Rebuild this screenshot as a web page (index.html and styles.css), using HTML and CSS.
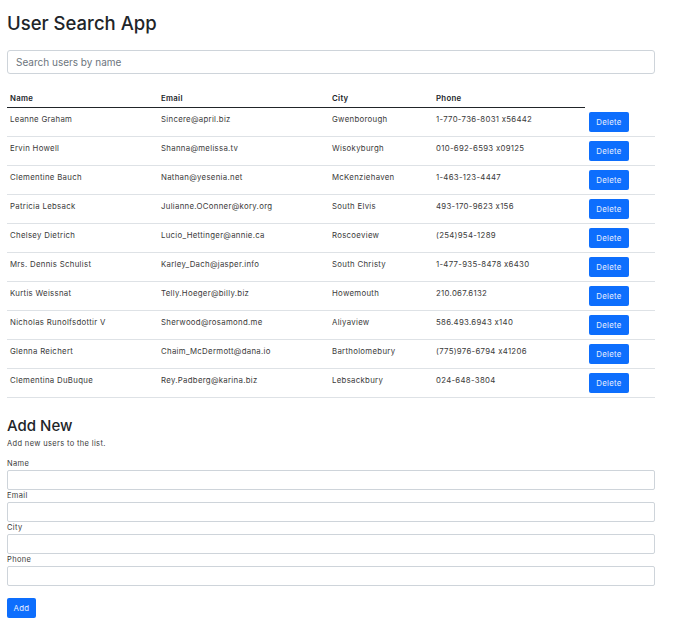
FILE: index.html
```html
<!DOCTYPE html>
<html lang="en">
<head>
<meta charset="utf-8">
<title>User Search App</title>
<link rel="stylesheet" href="styles.css">
</head>
<body>
<div class="app">
  <h1 class="title">User Search App</h1>
  <input class="search" type="text" placeholder="Search users by name">
  <table class="users">
    <colgroup>
      <col class="c-name"><col class="c-email"><col class="c-city"><col class="c-phone"><col class="c-act">
    </colgroup>
    <thead>
      <tr><th>Name</th><th>Email</th><th>City</th><th>Phone</th></tr>
    </thead>
    <tbody>
      <tr><td>Leanne Graham</td><td>Sincere@april.biz</td><td>Gwenborough</td><td>1-770-736-8031 x56442</td><td class="act"><button class="btn">Delete</button></td></tr>
      <tr><td>Ervin Howell</td><td>Shanna@melissa.tv</td><td>Wisokyburgh</td><td>010-692-6593 x09125</td><td class="act"><button class="btn">Delete</button></td></tr>
      <tr><td>Clementine Bauch</td><td>Nathan@yesenia.net</td><td>McKenziehaven</td><td>1-463-123-4447</td><td class="act"><button class="btn">Delete</button></td></tr>
      <tr><td>Patricia Lebsack</td><td>Julianne.OConner@kory.org</td><td>South Elvis</td><td>493-170-9623 x156</td><td class="act"><button class="btn">Delete</button></td></tr>
      <tr><td>Chelsey Dietrich</td><td>Lucio_Hettinger@annie.ca</td><td>Roscoeview</td><td>(254)954-1289</td><td class="act"><button class="btn">Delete</button></td></tr>
      <tr><td>Mrs. Dennis Schulist</td><td>Karley_Dach@jasper.info</td><td>South Christy</td><td>1-477-935-8478 x6430</td><td class="act"><button class="btn">Delete</button></td></tr>
      <tr><td>Kurtis Weissnat</td><td>Telly.Hoeger@billy.biz</td><td>Howemouth</td><td>210.067.6132</td><td class="act"><button class="btn">Delete</button></td></tr>
      <tr><td>Nicholas Runolfsdottir V</td><td>Sherwood@rosamond.me</td><td>Aliyaview</td><td>586.493.6943 x140</td><td class="act"><button class="btn">Delete</button></td></tr>
      <tr><td>Glenna Reichert</td><td>Chaim_McDermott@dana.io</td><td>Bartholomebury</td><td>(775)976-6794 x41206</td><td class="act"><button class="btn">Delete</button></td></tr>
      <tr><td>Clementina DuBuque</td><td>Rey.Padberg@karina.biz</td><td>Lebsackbury</td><td>024-648-3804</td><td class="act"><button class="btn">Delete</button></td></tr>
    </tbody>
  </table>

  <h3 class="sub">Add New</h3>
  <p class="desc">Add new users to the list.</p>
  <form class="form">
    <label class="label">Name</label>
    <input class="field" type="text">
    <label class="label">Email</label>
    <input class="field" type="text">
    <label class="label">City</label>
    <input class="field" type="text">
    <label class="label">Phone</label>
    <input class="field" type="text">
    <button class="btn add" type="button">Add</button>
  </form>
</div>
</body>
</html>
```

FILE: styles.css
```css
* { box-sizing: border-box; }
html, body { margin: 0; background: #fff; }
body {
  font-family: Inter, "Liberation Sans", sans-serif;
  color: #212529;
}
.app {
  width: 648px;
  margin-left: 7px;
  display: flex;
  flex-direction: column;
  align-items: flex-start;
}
.title {
  margin: 11px 0 0;
  font-size: 18.5px;
  line-height: 24px;
  font-weight: 500;
  color: #212529;
}
.search {
  margin-top: 15px;
  width: 648px;
  height: 24px;
  border: 1px solid #ced4da;
  border-radius: 3px;
  padding: 0 8px;
  font-family: Inter, "Liberation Sans", sans-serif;
  font-size: 10px;
  color: #212529;
  outline: none;
}
.search::placeholder { color: #6c757d; }
.users {
  margin-top: 13px;
  width: 648px;
  border-collapse: collapse;
  table-layout: fixed;
  font-size: 7.8px;
  letter-spacing: 0.3px;
  color: #3a3a3a;
}
.c-name { width: 151px; }
.c-email { width: 171px; }
.c-city { width: 104px; }
.c-phone { width: 152px; }
.c-act { width: 70px; }
.users th {
  text-align: left;
  font-weight: 600;
  color: #212529;
  padding: 5px 3px 3px;
  line-height: 12px;
  border-bottom: 1px solid #212529;
}
.users td {
  padding: 5px 3px 3px;
  line-height: 12px;
  vertical-align: top;
  border-bottom: 1px solid #dee2e6;
}
.users td.act { padding: 4px 3px 4px 4px; }
.btn {
  display: block;
  height: 20px;
  border: none;
  border-radius: 2px;
  background: #0d6efd;
  color: #e8f0ff;
  font-family: Inter, "Liberation Sans", sans-serif;
  font-size: 7.8px;
  letter-spacing: 0.3px;
  padding: 0;
  width: 40px;
}
.sub {
  margin: 19px 0 0;
  font-size: 15px;
  line-height: 18px;
  font-weight: 500;
  color: #212529;
}
.desc {
  margin: 4px 0 0;
  font-size: 7.5px;
  line-height: 10px;
  letter-spacing: 0.35px;
  color: #3a3a3a;
}
.form {
  margin-top: 9px;
  width: 648px;
  display: flex;
  flex-direction: column;
  align-items: flex-start;
}
.label {
  font-size: 7.5px;
  line-height: 12px;
  letter-spacing: 0.35px;
  color: #3a3a3a;
}
.field {
  width: 648px;
  height: 20px;
  border: 1px solid #ced4da;
  border-radius: 2px;
  outline: none;
}
.btn.add {
  margin-top: 12px;
  width: 29px;
}
```
